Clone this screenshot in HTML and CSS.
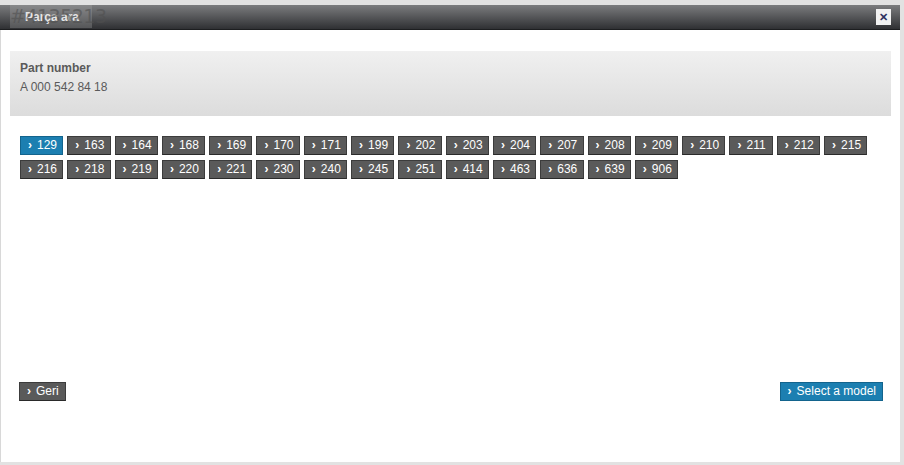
FILE: index.html
```html
<!DOCTYPE html>
<html lang="en">
<head>
    <meta charset="UTF-8">
    <title>Parça ara</title>
    <link rel="stylesheet" href="styles.css">
</head>
<body>
<div class="dialog">
    <div class="dialog-head">
        <span class="dialog-title">Parça ara</span>
        <span class="stamp">#4135213</span>
        <span class="close-button">&#x2715;</span>
    </div>
    <div class="dialog-body">
        <div class="part-box">
            <div class="part-label">Part number</div>
            <div class="part-value">A 000 542 84 18</div>
        </div>
        <div class="series-list">
            <span class="btn btn-blue">129</span>
            <span class="btn">163</span>
            <span class="btn">164</span>
            <span class="btn">168</span>
            <span class="btn">169</span>
            <span class="btn">170</span>
            <span class="btn">171</span>
            <span class="btn">199</span>
            <span class="btn">202</span>
            <span class="btn">203</span>
            <span class="btn">204</span>
            <span class="btn">207</span>
            <span class="btn">208</span>
            <span class="btn">209</span>
            <span class="btn">210</span>
            <span class="btn">211</span>
            <span class="btn">212</span>
            <span class="btn">215</span>
            <span class="btn">216</span>
            <span class="btn">218</span>
            <span class="btn">219</span>
            <span class="btn">220</span>
            <span class="btn">221</span>
            <span class="btn">230</span>
            <span class="btn">240</span>
            <span class="btn">245</span>
            <span class="btn">251</span>
            <span class="btn">414</span>
            <span class="btn">463</span>
            <span class="btn">636</span>
            <span class="btn">639</span>
            <span class="btn">906</span>
        </div>
        <div class="dialog-foot">
            <span class="btn btn-wide">Geri</span>
            <span class="btn btn-blue btn-wide">Select a model</span>
        </div>
    </div>
</div>
</body>
</html>
```
FILE: styles.css
```css
body {
    margin: 0;
    padding-top: 5px;
    background: #e2e2e2;
    font-family: 'Liberation Sans', Arial, sans-serif;
    font-size: 12px;
    overflow: hidden;
}

.dialog {
    width: 900px;
    height: 457px;
    background: #ffffff;
    display: flex;
    flex-direction: column;
}

.dialog-head {
    position: relative;
    height: 24px;
    background: linear-gradient(#7b7c7e, #2f3033);
    border-bottom: 1px solid #1d1e20;
    display: flex;
    align-items: center;
    padding-left: 25px;
}

.dialog-title {
    color: #ffffff;
    font-weight: bold;
    font-size: 12px;
}

.stamp {
    position: absolute;
    left: 10px;
    top: 0;
    width: 82px;
    height: 23px;
    line-height: 23px;
    background: rgba(170, 170, 170, 0.3);
    color: rgba(80, 80, 80, 0.6);
    font-family: 'DejaVu Sans', sans-serif;
    font-size: 19px;
    letter-spacing: -0.5px;
}

.close-button {
    position: absolute;
    right: 9px;
    top: 4px;
    width: 15px;
    height: 16px;
    background: #f1f1f1;
    color: #2d3160;
    font-weight: bold;
    font-size: 11px;
    line-height: 16px;
    text-align: center;
}

.dialog-body {
    flex: 1;
    display: flex;
    flex-direction: column;
    padding: 21px 9px 0 9px;
    border-left: 1px solid #d8d8d8;
}

.part-box {
    height: 65px;
    padding: 8px 10px 0;
    box-sizing: border-box;
    background: linear-gradient(#f0f0f0, #dcdcdc);
    color: #5a5a5a;
    font-size: 12px;
    line-height: 19px;
}

.part-label {
    font-weight: bold;
}

.series-list {
    display: flex;
    flex-wrap: wrap;
    gap: 5px 4px;
    padding: 20px 0 0 10px;
    width: 860px;
}

.btn {
    box-sizing: border-box;
    width: 43.3px;
    height: 19px;
    padding-left: 7px;
    background: #5a5a5a;
    border: 1px solid #3c3c3c;
    border-bottom-color: #2a2a2a;
    color: #ffffff;
    font-size: 12px;
    line-height: 17px;
}

.btn::before {
    content: "\203A";
    font-weight: bold;
    margin-right: 5px;
}

.btn-blue {
    background: #1c7fb1;
    border-color: #13648d;
}

.dialog-foot {
    margin-top: auto;
    margin-bottom: 61px;
    display: flex;
    justify-content: space-between;
    padding: 0 8px 0 9px;
}

.btn-wide {
    width: auto;
    padding-right: 6px;
}
```
